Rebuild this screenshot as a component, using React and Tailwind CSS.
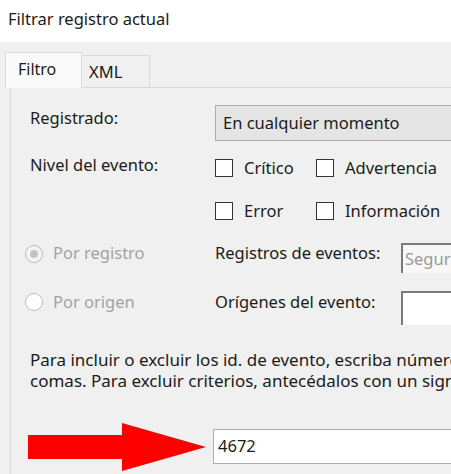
export default function App() {
  const font = { fontFamily: '"Noto Sans", "Open Sans", sans-serif' };
  return (
    <div className="w-[451px] h-[474px] overflow-hidden bg-[#f0f0f0] text-[#1b1b1b] flex flex-col" style={font}>
      <div className="h-[42px] shrink-0 bg-white flex items-center pl-[8px] text-[16.5px] pb-[3px]">Filtrar registro actual</div>
      <div className="flex items-end pl-[5px] h-[45px] shrink-0">
        <div className="relative z-10 -mb-px w-[77px] h-[36px] bg-[#fafafa] border border-b-0 border-[#d9d9d9] pl-[12px] pt-[4px] text-[16px]">Filtro</div>
        <div className="w-[68px] h-[32px] border-t border-r border-[#d9d9d9] pl-[7px] pt-[4px] text-[16.5px]">XML</div>
      </div>
      <div className="ml-[10px] w-[600px] flex-1 border-l border-t border-[#d9d9d9] bg-[#f0f0f0] pl-[19px] text-[16.5px]">
        <div className="flex mt-[17px] h-[36px]">
          <div className="w-[185px] shrink-0 pt-[1px]">Registrado:</div>
          <div className="flex-1 border border-[#adadad] bg-[#e5e5e5] flex items-center pl-[7px]">En cualquier momento</div>
        </div>
        <div className="flex mt-[18px] h-[18px] items-center">
          <div className="w-[185px] shrink-0 -mt-[6px]">Nivel del evento:</div>
          <div className="w-[101px] flex items-center gap-[11px]">
            <span className="w-[18px] h-[18px] border border-[#333] bg-white"></span>
            <span>Crítico</span>
          </div>
          <div className="flex items-center gap-[11px]">
            <span className="w-[18px] h-[18px] border border-[#333] bg-white"></span>
            <span>Advertencia</span>
          </div>
        </div>
        <div className="flex mt-[25px] h-[18px] items-center">
          <div className="w-[185px] shrink-0"></div>
          <div className="w-[101px] flex items-center gap-[11px]">
            <span className="w-[18px] h-[18px] border border-[#333] bg-white"></span>
            <span>Error</span>
          </div>
          <div className="flex items-center gap-[11px]">
            <span className="w-[18px] h-[18px] border border-[#333] bg-white"></span>
            <span className="whitespace-nowrap">Información</span>
          </div>
        </div>
        <div className="flex mt-[23px] h-[30px] items-center">
          <div className="w-[190px] -ml-[5px] shrink-0 flex items-center gap-[10px] text-[#a3a3a3] -mt-[9px]">
            <span className="w-[18px] h-[18px] rounded-full border border-[#bcbcbc] bg-[#f3f3f3] flex items-center justify-center">
              <span className="w-[8px] h-[8px] rounded-full bg-[#c2c2c2]"></span>
            </span>
            <span>Por registro</span>
          </div>
          <div className="w-[186px] shrink-0 -mt-[9px] whitespace-nowrap">Registros de eventos:</div>
          <div className="flex-1 h-[30px] border-l-2 border-t-2 border-[#7a7a7a] bg-[#f7f7f7] text-[#9a9a9a] pl-[2px] flex items-center">Seguridad</div>
        </div>
        <div className="flex mt-[18px] h-[34px] items-center">
          <div className="w-[190px] -ml-[5px] shrink-0 flex items-center gap-[10px] text-[#a3a3a3] -mt-[12px]">
            <span className="w-[18px] h-[18px] rounded-full border border-[#bcbcbc] bg-white"></span>
            <span>Por origen</span>
          </div>
          <div className="w-[186px] shrink-0 -mt-[12px] whitespace-nowrap">Orígenes del evento:</div>
          <div className="flex-1 h-[34px] border-l-2 border-t-2 border-[#7a7a7a] bg-white"></div>
        </div>
        <div className="mt-[24px] text-[17px] leading-[21px] whitespace-nowrap">
          <div>Para incluir o excluir los id. de evento, escriba números separados por</div>
          <div>comas. Para excluir criterios, antecédalos con un signo menos.</div>
        </div>
        <div className="flex mt-[38px] h-[35px] items-center">
          <div className="w-[185px] shrink-0 -ml-[2px] flex items-center">
            <svg width="180" height="48" viewBox="0 0 180 48">
              <polygon points="0,12 94,12 94,0 178,24 94,48 94,36 0,36" fill="#ff0000" />
            </svg>
          </div>
          <div className="flex-1 h-[35px] border border-[#adadad] bg-white flex items-center pl-[4px]">4672</div>
        </div>
      </div>
    </div>
  );
}
